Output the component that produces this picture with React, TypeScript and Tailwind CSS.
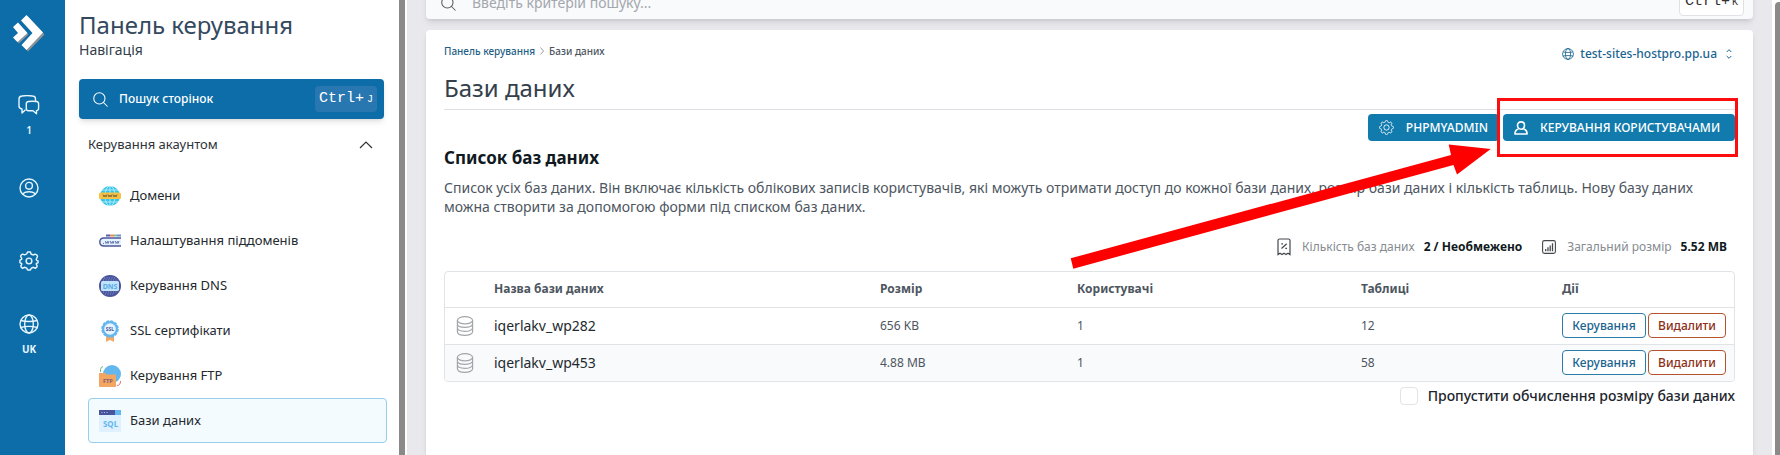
import React from "react";

type IconProps = { className?: string };

const Search = ({ className }: IconProps) => (
  <svg viewBox="0 0 16 16" fill="none" stroke="currentColor" strokeWidth="1.1" strokeLinecap="round" className={className}>
    <circle cx="6.8" cy="6.8" r="6" />
    <path d="M11.2 11.2 15.2 15.2" />
  </svg>
);

const Logo = () => (
  <svg viewBox="0 0 34 40" className="h-10 w-[34px]">
    <g fill="#8b9299" transform="translate(1.5 1.5)">
      <path d="M11 5 14.500 0 31 18 14.500 35 9.500 30 20.500 18z" />
      <path d="M1 12 5.500 8 15 18 5.500 27 1 23 6.500 18z" />
    </g>
    <g fill="#fff">
      <path d="M9 5.500 14.500 0 31 17.500 14.500 35 9.500 30 20.500 18z" />
      <path d="M1 12 6 7.500 15.500 18 5.500 27 1 22.500 6 18z" />
    </g>
  </svg>
);

const Chats = () => (
  <svg viewBox="0 0 22 20" fill="none" stroke="currentColor" strokeWidth="1.4" strokeLinejoin="round" className="h-5 w-[22px]">
    <path d="M17.500 6V4Q17.500 1 14.500 1Q9 .3 4 1Q1 1.300 1 4V11Q1 13.700 4 14V18L7.500 14.800" />
    <path d="M10.500 6.500Q14.500 6 18.500 6.500Q20.600 6.800 20.600 8.800V13.300Q20.600 15.400 18.500 15.600V18.700L15 15.800H10.500Q8.300 15.600 8.300 13.400V8.800Q8.300 6.800 10.500 6.500Z" />
  </svg>
);

const UserCircle = () => (
  <svg viewBox="0 0 20 20" fill="none" stroke="currentColor" strokeWidth="1.400" className="size-5">
    <circle cx="10" cy="10" r="9" />
    <circle cx="10" cy="7.800" r="3.400" />
    <path d="M3.800 16.300C5.500 12.800 14.500 12.800 16.200 16.300" />
  </svg>
);

const Settings = () => (
  <svg viewBox="1.500 1.500 21 21" fill="none" stroke="currentColor" strokeWidth="1.500" strokeLinejoin="round" className="size-5">
    <path d="M9.900 3.900 10.500 2.500H13.500L14.100 4.600Q15.300 5 16.400 5.700L18.400 4.800 20.400 5.900Q21 6.500 20.900 7.300L20 9.200Q19.400 10 19.800 11L21.500 11.800V13.800Q21 14.200 20 14.300Q19.500 14.500 19.700 15.500L20.600 17Q20.600 18.800 18.700 19.600L16.700 18.600Q15.500 19 14.400 19.500L13.500 21.500H10.500L9.600 19.500Q8.500 19 7.300 18.600L5.300 19.600Q3.400 18.800 3.400 17L4.300 15.500Q4.500 14.500 4 14.300Q3 14.200 2.500 13.800V11L4.200 10.300Q4.600 9.500 4 8.600L3.200 7.200Q3.300 5.600 5.300 4.700L7.400 5.500Q8.600 5 9.600 4.600Z" />
    <circle cx="12" cy="12" r="3" />
  </svg>
);

const Globe = ({ className }: IconProps) => (
  <svg viewBox="0 0 20 20" fill="none" stroke="currentColor" strokeWidth="1.400" className={className}>
    <circle cx="10" cy="10" r="9" />
    <ellipse cx="10" cy="10" rx="4.300" ry="9" />
    <path d="M2 6.500C6 7.800 14 7.800 18 6.500M1.500 13.500C6 12.300 14 12.300 18.500 13.500" />
  </svg>
);

const Gear = () => {
  const points = Array.from({ length: 96 }, (_, i) => {
    const a = (i / 96) * Math.PI * 2;
    const r = 7 + 0.9 * Math.tanh(2.5 * Math.cos(a * 8));
    return `${(8.5 + r * Math.cos(a)).toFixed(2)},${(8.5 + r * Math.sin(a)).toFixed(2)}`;
  }).join(" ");
  return (
    <svg viewBox="0 0 17 17" fill="none" stroke="currentColor" strokeWidth="1" strokeLinejoin="round" className="size-[15px]">
      <polygon points={points} />
      <circle cx="8.500" cy="8.500" r="3" />
    </svg>
  );
};

const User = () => (
  <svg viewBox="0 0 14 14" fill="none" stroke="currentColor" strokeWidth="1.600" strokeLinejoin="round" className="size-[14px]">
    <path d="M7 .9C9.300 .9 10.500 2.500 10.500 4.300C10.500 6.500 9.100 8.200 7 8.200C4.900 8.200 3.500 6.500 3.500 4.300C3.500 2.500 4.700 .9 7 .9Z" />
    <path d="M4.500 8C2 8.600 .9 10 .9 13H13.100C13.100 10 12 8.600 9.500 8" />
  </svg>
);

const Database = () => (
  <svg viewBox="0 0 18 20" fill="none" stroke="currentColor" strokeWidth="1.200" className="h-5 w-[18px]">
    <ellipse cx="9" cy="4.300" rx="7.600" ry="3.600" />
    <path d="M1.400 4.300V15.700C1.400 20.500 16.600 20.500 16.600 15.700V4.300M1.400 8C1.400 12.500 16.600 12.500 16.600 8M1.400 11.800C1.400 16.500 16.600 16.500 16.600 11.800" />
  </svg>
);

const Receipt = () => (
  <svg viewBox="0 0 14 18" fill="none" stroke="currentColor" strokeWidth="1.200" className="h-[18px] w-[14px]">
    <path d="M1 16.600V2.500Q1 1 2.500 1H11.500Q13 1 13 2.500V16.600L11 15.200 9 16.600 7 15.200 5 16.600 3 15.200Z" />
    <path d="M4.500 10.500 9.700 5.700M4.300 5.800H6M8.300 10.300H10" />
  </svg>
);

const Chart = () => (
  <svg viewBox="0 0 14 14" fill="none" stroke="currentColor" strokeWidth="1.100" className="size-[14px]">
    <rect x=".6" y=".6" width="12.800" height="12.800" rx="1.800" />
    <path d="M3.700 11.200V9M6 11.200V7.300M8.200 11.200V5.500M10.500 11.200V3.300" strokeWidth="1.300" />
  </svg>
);

const DomainIcon = () => (
  <svg viewBox="0 0 22 22" className="size-[22px]">
    <circle cx="11" cy="11" r="10" fill="#35c4e8" />
    <g fill="none" stroke="#c9f3fb" strokeWidth=".8">
      <ellipse cx="11" cy="11" rx="5" ry="10" />
      <path d="M11 1V21M3 5H19M3 17H19" />
    </g>
    <rect y="7.500" width="22" height="6.500" rx="1.500" fill="#f5c244" />
    <path d="M4 9.500 5 12 6 10 7 12 8 9.500M9 9.500 10 12 11 10 12 12 13 9.500M14 9.500 15 12 16 10 17 12 18 9.500" fill="none" stroke="#7a6437" strokeWidth=".9" />
  </svg>
);

const SubdomainIcon = () => (
  <svg viewBox="0 0 22 22" className="size-[22px]">
    <path d="M7 5.500H11" stroke="#5a61a8" strokeWidth="2" />
    <path d="M11 5.500H15" stroke="#e58a5f" strokeWidth="2" />
    <path d="M15 5.500H18" stroke="#7cc28d" strokeWidth="2" />
    <path d="M18 5.500H22" stroke="#6f8fd0" strokeWidth="2" />
    <path d="M22 8H5Q.8 8 .8 12Q.8 16 5 16H22" fill="#e3f2ff" stroke="#4c5599" strokeWidth="1.400" />
    <path d="M4 13.500H5M6.500 11 7 13.500 8.500 11.500 9 13.500 10 11M11.500 11 12 13.500 13.500 11.500 14 13.500 15 11M16.500 11 17 13.500 18.500 11.500 19 13.500 20 11" fill="none" stroke="#4c5599" strokeWidth=".8" />
  </svg>
);

const DnsIcon = () => (
  <svg viewBox="0 0 22 22" className="size-[22px]">
    <circle cx="11" cy="11" r="11" fill="#4b549b" />
    <g stroke="#8fb3e6" strokeWidth=".8" strokeDasharray="1 1.500">
      <path d="M5 3H17M4 5H18M4 17H18M6 19H16" />
    </g>
    <rect x="2" y="6" width="18" height="10" rx="1.500" fill="#bfe3fb" />
    <text x="11" y="13.500" textAnchor="middle" fontSize="7" fontWeight="700" fill="#58a9e6" fontFamily="Noto Sans, sans-serif">DNS</text>
  </svg>
);

const SslIcon = () => (
  <svg viewBox="0 0 22 22" className="size-[22px]">
    <path d="M7 14H15V22L11 20 7 22Z" fill="#f3aa66" />
    <circle cx="11" cy="9" r="8" fill="#63b7ee" stroke="#63b7ee" strokeWidth="1.500" strokeDasharray="3 1.200" />
    <circle cx="11" cy="9" r="5.800" fill="#e6f4ff" />
    <text x="11" y="10.900" textAnchor="middle" fontSize="5" fontWeight="700" fill="#4b549b" fontFamily="Noto Sans, sans-serif">SSL</text>
  </svg>
);

const FtpIcon = () => (
  <svg viewBox="0 0 22 22" className="size-[22px]">
    <circle cx="13" cy="9" r="9" fill="#63b7ee" />
    <path d="M1.500 7V4.500Q1.500 2 4 1.500" fill="none" stroke="#67bd80" strokeWidth="1" />
    <path d="M21.500 16Q21.500 20.500 18 20.500" fill="none" stroke="#e86d62" strokeWidth="1" />
    <path d="M0 8H6L7.500 9.500H17V21Q17 22 16 22H1Q0 22 0 21Z" fill="#f3a562" />
    <text x="8.800" y="17.500" textAnchor="middle" fontSize="5.500" fontWeight="700" fill="#7b5a74" fontFamily="Noto Sans, sans-serif">FTP</text>
  </svg>
);

const SqlIcon = () => (
  <svg viewBox="0 0 22 22" className="size-[22px]">
    <rect width="22" height="22" fill="#dff1fe" />
    <rect width="16" height="5" fill="#4b549b" />
    <rect x="16" width="6" height="5" fill="#63b7ee" />
    <path d="M2.500 2.500H9" stroke="#a9c5ee" strokeWidth="1" strokeDasharray="1 1.500" />
    <text x="11.500" y="16.500" textAnchor="middle" fontSize="8" fontWeight="700" fill="#63b7ee" fontFamily="Noto Sans, sans-serif">SQL</text>
  </svg>
);

const navItems = [
  { label: "Домени", Icon: DomainIcon },
  { label: "Налаштування піддоменів", Icon: SubdomainIcon },
  { label: "Керування DNS", Icon: DnsIcon },
  { label: "SSL сертифікати", Icon: SslIcon },
  { label: "Керування FTP", Icon: FtpIcon },
  { label: "Бази даних", Icon: SqlIcon, active: true },
];

const databases = [
  { name: "iqerlakv_wp282", size: "656 KB", users: 1, tables: 12 },
  { name: "iqerlakv_wp453", size: "4.88 MB", users: 1, tables: 58 },
];

function Rail() {
  return (
    <nav aria-label="Меню" className="flex w-[65px] shrink-0 flex-col items-center bg-[#0c6da9] pr-[7px] pt-[15px] text-[#e8f6ff]">
      <a href="#home" aria-label="DirectAdmin"><Logo /></a>
      <a href="#messages" className="mt-10 flex flex-col items-center gap-[9px] text-[10px] leading-3 font-semibold">
        <Chats />
        1
      </a>
      <a href="#profile" aria-label="Профіль" className="mt-[42px]"><UserCircle /></a>
      <a href="#settings" aria-label="Налаштування" className="mt-[53px]"><Settings /></a>
      <button type="button" className="mt-[43px] flex flex-col items-center gap-[9px] text-[10px] leading-3 font-bold">
        <Globe className="size-5" />
        UK
      </button>
    </nav>
  );
}

function Sidebar() {
  return (
    <aside className="flex w-[342px] shrink-0">
      <div className="min-w-0 flex-1 pl-[14px] pt-[11px]">
        <h2 className="text-2xl leading-7 text-[#34495e]">Панель керування</h2>
        <p className="text-sm leading-[22px] text-[#34404b]">Навігація</p>
        <button type="button" className="mt-[18px] flex h-10 w-[305px] items-center rounded bg-[#0c6da9] pr-[7px] pl-[14px] text-white shadow-md">
          <Search className="size-[15px]" />
          <span className="ml-[11px] text-xs font-medium">Пошук сторінок</span>
          <kbd className="ml-auto flex h-[26px] items-center gap-[3px] rounded bg-[#2977b1] px-1 font-['Liberation_Mono',monospace] text-[15px]">
            Ctrl+<span className="text-[10px]">J</span>
          </kbd>
        </button>
        <button type="button" className="mt-4 ml-[9px] flex h-5 w-[285px] items-center justify-between text-[13px] text-[#2d3338]">
          Керування акаунтом
          <svg viewBox="0 0 14 8" fill="none" stroke="currentColor" strokeWidth="1.200" className="h-2 w-[14px]"><path d="M1 7 7 1 13 7" /></svg>
        </button>
        <ul className="mt-[18px] mr-3 ml-[9px]">
          {navItems.map(({ label, Icon, active }) => (
            <li key={label}>
              <a href="#item" className={active ? "flex h-[45px] items-center gap-[9px] rounded border border-[#95cfe9] bg-[#f3fbff] px-[10px] text-[13px] text-[#23292e]" : "flex h-[45px] items-center gap-[9px] border border-transparent px-[10px] text-[13px] text-[#23292e]"}>
                <Icon />
                {label}
              </a>
            </li>
          ))}
        </ul>
      </div>
      <div className="mr-[2px] w-[6px] bg-[#8b8a89]" />
    </aside>
  );
}

function Topbar() {
  return (
    <header className="flex h-[19px] items-end">
      <div className="flex h-8 flex-1 items-center rounded-b bg-[#f9fafc] pr-[9px] pl-[15px] shadow-md">
        <Search className="size-[15px] text-[#55595f]" />
        <input type="search" aria-label="Пошук" placeholder="Введіть критерій пошуку..." className="ml-4 min-w-0 flex-1 bg-transparent text-sm outline-none placeholder:text-[#a3a7ae]" />
        <kbd className="mb-[2px] flex h-7 items-center gap-[2px] rounded border border-[#dfe1e5] bg-white px-[5px] font-['Liberation_Mono',monospace] text-[15px] text-[#333]">
          Ctrl+<span className="text-[10px]">K</span>
        </kbd>
      </div>
    </header>
  );
}

function DatabaseTable() {
  return (
    <div className="mt-[14px] overflow-hidden rounded border border-[#e1e4e7]">
      <table className="w-full table-fixed text-left text-xs text-[#4d565f]">
        <thead>
          <tr className="h-[35px] font-semibold">
            <td className="w-[41px]" />
            <th className="px-2">Назва бази даних</th>
            <th className="w-[197px] px-2">Розмір</th>
            <th className="w-[284px] px-2">Користувачі</th>
            <th className="w-[201px] px-2">Таблиці</th>
            <th className="w-[180px] px-2">Дії</th>
          </tr>
        </thead>
        <tbody>
          {databases.map((db) => (
            <tr key={db.name} className="h-[37px] border-t border-[#e1e4e7] even:bg-[#f9fafc]">
              <td className="pl-[11px] text-[#a3a7ac]"><Database /></td>
              <td className="px-2 text-sm text-[#23292e]">{db.name}</td>
              <td className="px-2">{db.size}</td>
              <td className="px-2">{db.users}</td>
              <td className="px-2">{db.tables}</td>
              <td className="px-2">
                <div className="flex gap-[2px] font-medium">
                  <button type="button" className="h-[25px] flex-[82] rounded border border-[#2a7da6] bg-white text-[#1a6490]">Керування</button>
                  <button type="button" className="h-[25px] flex-[76] rounded border border-[#b5532f] bg-white text-[#8d3016]">Видалити</button>
                </div>
              </td>
            </tr>
          ))}
        </tbody>
      </table>
    </div>
  );
}

export default function App() {
  return (
    <div className="flex min-h-screen overflow-hidden bg-white font-['Noto_Sans',sans-serif]">
      <Rail />
      <Sidebar />
      <div className="flex min-w-0 flex-1 flex-col bg-[#e9e8ed] px-[19px]">
        <Topbar />
        <main className="mt-[11px] flex-1 rounded-t bg-white px-[18px] pt-[14px] shadow-md">
          <div className="flex items-start justify-between">
            <nav aria-label="Шлях" className="flex items-center gap-[5px] text-[10px] leading-[14px] font-medium">
              <a href="#panel" className="text-[#1f5f86]">Панель керування</a>
              <svg viewBox="0 0 4 8" fill="none" stroke="#9aa0a6" className="h-2 w-1"><path d="M.5.5 3.500 4 .5 7.500" /></svg>
              <span className="text-[#4d565f]">Бази даних</span>
            </nav>
            <button type="button" className="mt-[2px] mr-[3px] flex items-center text-xs leading-4 font-medium text-[#1a6490]">
              <Globe className="mr-[6px] size-3" />
              test-sites-hostpro.pp.ua
              <svg viewBox="0 0 6 10" fill="none" stroke="currentColor" className="ml-[9px] h-[10px] w-[6px]"><path d="M.7 3 3 .7 5.300 3M.7 7 3 9.300 5.300 7" /></svg>
            </button>
          </div>
          <h1 className="mt-3 border-b border-[#dde1e5] pb-[7px] text-2xl leading-7 text-[#34404b]">Бази даних</h1>
          <div className="mt-1 flex justify-end gap-1 text-xs font-medium text-white">
            <button type="button" className="flex h-[27px] min-w-[130px] items-center gap-3 rounded bg-[#127bad] px-[11px]">
              <Gear />
              PHPMYADMIN
            </button>
            <div className="relative">
              <button type="button" className="flex h-[27px] min-w-[232px] items-center gap-3 rounded bg-[#127bad] px-[11px]">
                <User />
                КЕРУВАННЯ КОРИСТУВАЧАМИ
              </button>
              <div className="pointer-events-none absolute -top-4 -right-[3px] -bottom-4 -left-[6px] border-[3px] border-[#fb0d10]" />
              <svg viewBox="1070 144 421 125" className="pointer-events-none absolute top-[30px] right-[244px] h-[125px] w-[421px] max-w-none">
                <path d="M1070.700 258.300 1451 155 1448.700 144.500 1490.700 149 1457 174.500 1453.500 165 1073.300 268.700Z" fill="#ff0000" />
              </svg>
            </div>
          </div>
          <h3 className="mt-[7px] text-[17px] leading-5 font-bold text-[#101921]">Список баз даних</h3>
          <p className="mt-[10px] text-sm leading-[19px] text-[#4d565f]">
            Список усіх баз даних. Він включає кількість облікових записів користувачів, які можуть отримати доступ до кожної бази даних, розмір бази даних і кількість таблиць. Нову базу даних можна створити за допомогою форми під списком баз даних.
          </p>
          <dl className="mt-[21px] mr-2 flex items-center justify-end text-xs leading-5">
            <div className="flex items-center text-[#44494e]">
              <Receipt />
              <dt className="ml-[11px] text-[#858b91]">Кількість баз даних</dt>
              <dd className="ml-[9px] font-bold text-[#101921]">2 / Необмежено</dd>
            </div>
            <div className="ml-5 flex items-center text-[#44494e]">
              <Chart />
              <dt className="ml-[11px] text-[#858b91]">Загальний розмір</dt>
              <dd className="ml-[9px] font-bold text-[#101921]">5.52 MB</dd>
            </div>
          </dl>
          <DatabaseTable />
          <label className="mt-[5px] flex items-center justify-end gap-[10px] text-sm leading-[18px] font-medium text-[#1d252c]">
            <input type="checkbox" className="size-[18px] appearance-none rounded border border-[#e1e4e7] bg-white" />
            Пропустити обчислення розміру бази даних
          </label>
        </main>
      </div>
      <div className="flex w-2 shrink-0 pt-[2px] pl-[3px]">
        <div className="flex-1 rounded-tl bg-[#8b8a89]" />
      </div>
    </div>
  );
}
